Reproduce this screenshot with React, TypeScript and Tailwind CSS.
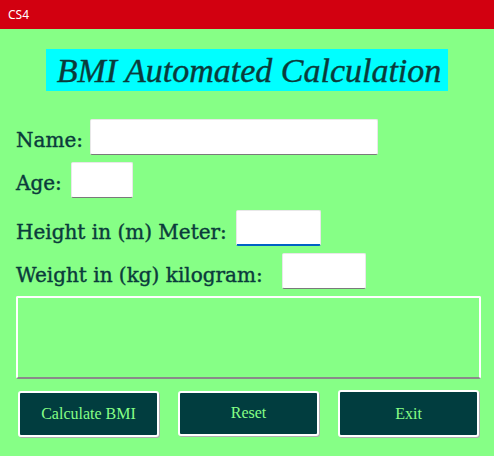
import React from "react";

export default function App() {
  const label =
    "text-[#0a3b3b] text-[20px] leading-none whitespace-nowrap [-webkit-text-stroke:0.4px_#0a3b3b]";
  const lf = { fontFamily: '"DejaVu Serif", "Liberation Serif", serif' };
  const input =
    "bg-white border border-[#e8e8e8] border-b-[#7a7a7a] outline-none rounded-[2px]";
  const btn =
    "w-[141px] bg-[#013d3f] border-2 border-white rounded-[3px] shadow-[1px_1px_0_#b0b0b0] text-[#86ff86] text-[16px]";
  return (
    <div className="w-[494px] h-[456px] bg-[#86ff86] flex flex-col overflow-hidden">
      <div
        className="h-[29px] bg-[#d20010] text-white text-[12px] flex items-center pl-[8px]"
        style={{ fontFamily: '"Noto Sans", "Liberation Sans", sans-serif' }}
      >
        CS4
      </div>
      <div className="flex justify-center mt-[20px]">
        <div
          className="w-[402px] h-[42px] bg-[#00ffff] flex items-center justify-center text-[#0a3b3b] italic text-[34px] pl-[4px] [-webkit-text-stroke:0.4px_#0a3b3b]"
          style={{ fontFamily: '"Liberation Serif", serif' }}
        >
          BMI Automated Calculation
        </div>
      </div>
      <div className="flex items-center mt-[28px] pl-[16px] h-[36px]">
        <div className={`${label} w-[74px] pt-[6px]`} style={lf}>
          Name:
        </div>
        <input className={`${input} w-[288px] h-[36px]`} />
      </div>
      <div className="flex items-center mt-[7px] pl-[16px] h-[36px]">
        <div className={`${label} w-[55px] pt-[6px]`} style={lf}>
          Age:
        </div>
        <input className={`${input} w-[62px] h-[36px]`} />
      </div>
      <div className="flex items-center mt-[12px] pl-[16px] h-[36px]">
        <div className={`${label} w-[220px] pt-[8px]`} style={lf}>
          Height in (m) Meter:
        </div>
        <input className="bg-white border border-[#e8e8e8] border-b-2 border-b-[#0062c4] outline-none rounded-[2px] w-[85px] h-[36px]" />
      </div>
      <div className="flex items-center mt-[7px] pl-[16px] h-[36px]">
        <div className={`${label} w-[266px] pt-[8px]`} style={lf}>
          Weight in (kg) kilogram:
        </div>
        <input className={`${input} w-[84px] h-[36px]`} />
      </div>
      <div className="mt-[7px] ml-[16px] w-[465px] h-[83px] border-2 border-white border-b-[#8a8a8a] rounded-[2px]" />
      <div
        className="flex mt-[11px] ml-[18px] gap-[19px] items-center"
        style={{ fontFamily: '"Liberation Serif", serif' }}
      >
        <button className={`${btn} h-[46px] mt-[1px]`}>Calculate BMI</button>
        <button className={`${btn} h-[45px] -mt-[1px]`}>Reset</button>
        <button className={`${btn} h-[47px]`}>Exit</button>
      </div>
    </div>
  );
}
